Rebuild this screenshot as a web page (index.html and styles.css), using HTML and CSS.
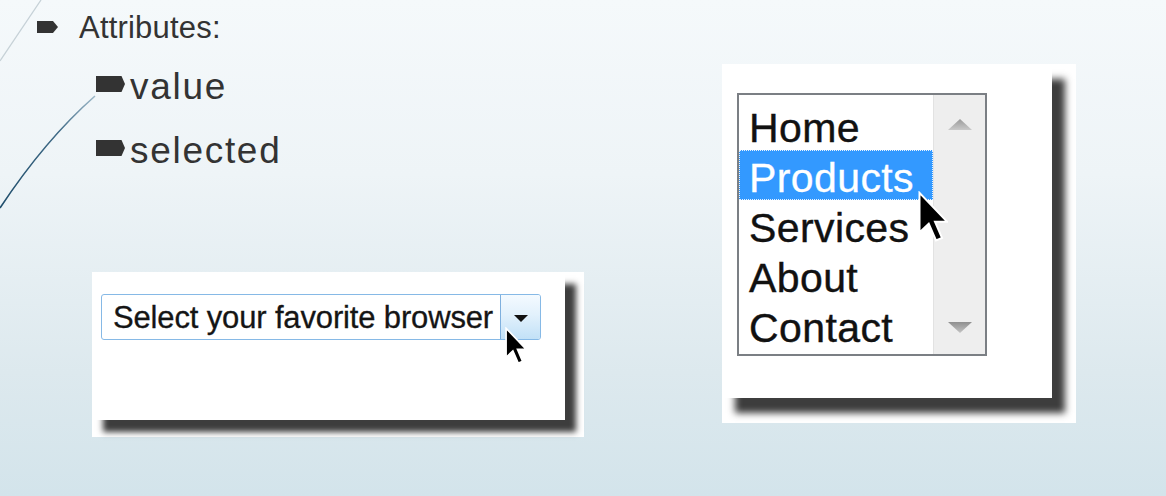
FILE: index.html
```html
<!DOCTYPE html>
<html>
<head>
<meta charset="utf-8">
<link rel="stylesheet" href="styles.css">
</head>
<body>
<div class="slide">
  <svg class="deco" width="1166" height="496" viewBox="0 0 1166 496">
    <defs>
      <linearGradient id="bl" x1="95" y1="96" x2="0" y2="208" gradientUnits="userSpaceOnUse">
        <stop offset="0" stop-color="#9db8c8"/>
        <stop offset="0.35" stop-color="#3f6a86"/>
        <stop offset="1" stop-color="#1f4d6b"/>
      </linearGradient>
    </defs>
    <path d="M41 0 L0 61" stroke="#c6d1d7" stroke-width="1.3" fill="none"/>
    <path d="M95 96 Q45 140 0 208" stroke="url(#bl)" stroke-width="1.6" fill="none"/>
  </svg>

  <div class="left">
    <ul class="bullets">
      <li class="l1"><span class="mark mark-s"></span><span>Attributes:</span></li>
      <li class="l2"><span class="mark mark-l"></span><span>value</span></li>
      <li class="l2"><span class="mark mark-l"></span><span>selected</span></li>
    </ul>

    <div class="pic pic-drop">
      <div class="card card-drop">
        <div class="select">
          <div class="sel-text">Select your favorite browser</div>
          <div class="sel-btn"><span class="tri-down"></span></div>
          <svg class="cursor cursor-drop" width="22" height="38" viewBox="0 0 12 20.5">
            <path d="M0.6 0.6 L0.6 16.4 L4.3 12.9 L7.2 19.6 L9.6 18.6 L6.8 12.1 L11.6 12.1 Z" fill="#000" stroke="#fff" stroke-width="0.9" stroke-linejoin="miter"/>
          </svg>
        </div>
      </div>
    </div>
  </div>

  <div class="right">
    <div class="pic pic-list">
      <div class="card card-list">
        <div class="listbox">
          <div class="opts">
            <div class="opt">Home</div>
            <div class="opt sel">Products</div>
            <div class="opt">Services</div>
            <div class="opt">About</div>
            <div class="opt">Contact</div>
          </div>
          <div class="scroll">
            <span class="arr arr-up"></span>
            <span class="arr arr-down"></span>
          </div>
          <svg class="cursor cursor-list" width="30" height="52" viewBox="0 0 12 20.5">
            <path d="M0.6 0.6 L0.6 16.4 L4.3 12.9 L7.2 19.6 L9.6 18.6 L6.8 12.1 L11.6 12.1 Z" fill="#000" stroke="#fff" stroke-width="0.8" stroke-linejoin="miter"/>
          </svg>
        </div>
      </div>
    </div>
  </div>
</div>
</body>
</html>
```

FILE: styles.css
```css
* { box-sizing: border-box; }
html, body { margin: 0; padding: 0; }
body { width: 1166px; height: 496px; overflow: hidden; }

.slide {
  position: relative;
  width: 1166px;
  height: 496px;
  display: flex;
  background: linear-gradient(180deg, #f5f9fb 0%, #eef4f7 35%, #dde9ee 75%, #d3e4eb 100%);
  font-family: "Liberation Sans", Arial, sans-serif;
}

.deco { position: absolute; left: 0; top: 0; pointer-events: none; }

.left { position: relative; width: 722px; flex: none; }
.right { position: relative; padding-top: 64px; }

.bullets {
  list-style: none;
  margin: 0;
  padding: 10px 0 0 37px;
  color: #333;
}
.bullets li { display: flex; align-items: center; }

.l1 { font-size: 31px; line-height: 36px; height: 36px; gap: 21px; letter-spacing: 0.2px; }
.l2 { font-size: 37px; line-height: 64px; height: 64px; gap: 5px; margin-left: 59px; letter-spacing: 1.7px; }
.l1 + .l2 { margin-top: 9px; }

.mark {
  display: block;
  background: #333;
  flex: none;
}
.mark-s {
  width: 21px; height: 12px; margin-top: -2px;
  clip-path: polygon(0 0, 76% 0, 100% 50%, 76% 100%, 0 100%);
}
.mark-l {
  width: 29px; height: 16px; margin-top: -6px;
  clip-path: polygon(0 0, 88% 0, 100% 50%, 88% 100%, 0 100%);
}

.pic { background: #fff; flex: none; }
.card { background: #fff; }

.pic-drop {
  width: 492px; height: 165px;
  margin: 89px 0 0 92px;
}
.card-drop {
  width: 473px; height: 148px;
  box-shadow: 11px 12px 6px #3d3d3d;
  padding: 22px 0 0 9px;
}
.select {
  position: relative;
  width: 440px; height: 46px;
  border: 1px solid #86b9e6;
  border-radius: 3px;
  display: flex;
  background: #fff;
}
.sel-text {
  flex: 1;
  font-size: 31px;
  line-height: 44px;
  padding: 1px 0 0 11px;
  color: #151515;
  letter-spacing: -0.15px;
  white-space: nowrap;
  -webkit-text-stroke: 0.3px #151515;
}
.sel-btn {
  width: 40px;
  flex: none;
  border-left: 1px solid #7fb0de;
  border-radius: 0 2px 2px 0;
  background: linear-gradient(180deg, #f4faff 0%, #e2f1fc 45%, #c2e1f7 100%);
  display: flex;
  align-items: center;
  justify-content: center;
}
.tri-down {
  width: 0; height: 0;
  border-left: 7px solid transparent;
  border-right: 7px solid transparent;
  border-top: 7px solid #111;
  margin-top: 2px;
}

.cursor { position: absolute; }
.cursor-drop { left: 403px; top: 32px; }
.cursor-list { left: 179px; top: 96px; }

.pic-list { width: 354px; height: 359px; }
.card-list {
  width: 330px; height: 334px;
  box-shadow: 13px 15px 7px #3d3d3d;
  padding: 29px 0 0 15px;
}
.listbox {
  position: relative;
  width: 250px; height: 263px;
  border: 2px solid #7b7f84;
  display: flex;
  background: #fff;
}
.opts { flex: 1; padding-top: 5px; }
.opt {
  height: 50px;
  line-height: 56px;
  font-size: 41px;
  padding-left: 10px;
  color: #111;
  white-space: nowrap;
  letter-spacing: 0.4px;
  -webkit-text-stroke: 0.4px #111;
}
.opt.sel {
  background: #3399ff;
  color: #fff;
  -webkit-text-stroke: 0.3px #fff;
  border: 1px dotted #e8f3ff;
  padding-left: 9px;
  line-height: 54px;
}
.scroll {
  width: 52px;
  flex: none;
  background: #eeeeee;
  border-left: 1px solid #e2e2e2;
  display: flex;
  flex-direction: column;
  align-items: center;
  justify-content: space-between;
  padding: 24px 0 21px 1px;
}
.arr {
  display: block;
  width: 24px; height: 11px;
}
.arr-up { clip-path: polygon(50% 0, 100% 100%, 0 100%); background: linear-gradient(180deg, #9a9a9a, #c9c9c9); }
.arr-down { clip-path: polygon(0 0, 100% 0, 50% 100%); background: linear-gradient(180deg, #8f8f8f, #c4c4c4); }
```
